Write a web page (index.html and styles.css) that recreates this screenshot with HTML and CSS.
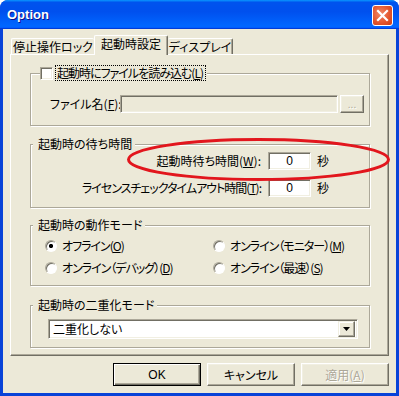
FILE: index.html
```html
<!DOCTYPE html>
<html lang="ja">
<head>
	<meta charset="UTF-8">
	<title>Option</title>
	<link rel="stylesheet" href="styles.css">
</head>
<body>
	<div class="window">
		<div class="titlebar">
			<span class="title">Option</span>
			<span class="close">
				<svg width="13" height="13" viewBox="0 0 13 13"><path d="M2 2L11 11M11 2L2 11" stroke="#fff" stroke-width="2.2" stroke-linecap="square"/></svg>
			</span>
		</div>
		<div class="client">
			<div class="tabs">
				<div class="tab tab-lock">停止操作ロック</div>
				<div class="tab active">起動時設定</div>
				<div class="tab tab-disp">ディスプレイ</div>
			</div>
			<div class="panel">
				<div class="group g-file">
					<div class="group-title check-title">
						<span class="checkbox"></span>
						<span class="focus tight">起動時にファイルを読み込む(<u>L</u>)</span>
					</div>
					<div class="row">
						<span class="file-label">ファイル名(<u>F</u>):</span>
						<span class="edit edit-off"></span>
						<span class="btn btn-dots">...</span>
					</div>
				</div>
				<div class="group g-wait">
					<div class="group-title">起動時の待ち時間</div>
					<div class="row">
						<span class="num-label">起動時待ち時間(<u>W</u>):</span>
						<span class="edit num">0</span>
						<span class="unit">秒</span>
					</div>
					<div class="row row2">
						<span class="num-label tight">ライセンスチェックタイムアウト時間(<u>T</u>):</span>
						<span class="edit num">0</span>
						<span class="unit">秒</span>
					</div>
				</div>
				<div class="group g-mode">
					<div class="group-title">起動時の動作モード</div>
					<div class="radios">
						<div class="radio-item tight"><span class="radio checked"></span>オフライン(<u>O</u>)</div>
						<div class="radio-item tight"><span class="radio"></span>オンライン（モニター）(<u>M</u>)</div>
						<div class="radio-item tight"><span class="radio"></span>オンライン（デバッグ）(<u>D</u>)</div>
						<div class="radio-item tight"><span class="radio"></span>オンライン（最速）(<u>S</u>)</div>
					</div>
				</div>
				<div class="group g-dup">
					<div class="group-title">起動時の二重化モード</div>
					<div class="combo">
						<span class="combo-text">二重化しない</span>
						<span class="drop"><svg width="7" height="4" viewBox="0 0 7 4"><path d="M0 0H7L3.5 4Z" fill="#000"/></svg></span>
					</div>
				</div>
			</div>
			<div class="buttons">
				<span class="btn btn-main default">OK</span>
				<span class="btn btn-main">キャンセル</span>
				<span class="btn btn-main off">適用(<u>A</u>)</span>
			</div>
		</div>
		<svg class="mark" width="399" height="396" viewBox="0 0 399 396"><ellipse cx="258.5" cy="159.5" rx="130" ry="20" fill="none" stroke="#e2161d" stroke-width="3"/></svg>
	</div>
</body>
</html>
```

FILE: styles.css
```css
*{
	padding:0;
	margin:0;
	box-sizing:border-box;
}
body{
	background:#fff;
	font-family:"Noto Sans CJK JP", sans-serif;
	font-size:12px;
	line-height:14px;
	font-feature-settings:"palt" 1;
	color:#000;
}
u{
	text-decoration:underline;
	text-underline-offset:1px;
}
.tight{
	letter-spacing:-1px;
}
.window{
	position:relative;
	width:399px;
	height:396px;
	display:flex;
	flex-direction:column;
	background:#0843d8;
	border-radius:8px 8px 0 0;
	overflow:hidden;
}
.titlebar{
	height:29px;
	flex:0 0 29px;
	display:flex;
	align-items:flex-start;
	justify-content:space-between;
	padding:0 6px 0 7px;
	background:linear-gradient(180deg,#0997ff,#0053ee 8%,#0050ee 40%,#0066ff 88%,#0066ff 93%,#005bff 95%,#003dd7 96%,#003dd7);
}
.title{
	margin-top:7px;
	font-family:"Liberation Sans", sans-serif;
	font-weight:bold;
	font-size:13px;
	line-height:16px;
	color:#fff;
	text-shadow:1px 1px #0f1089;
}
.close{
	margin-top:5px;
	width:21px;
	height:21px;
	display:flex;
	align-items:center;
	justify-content:center;
	border:1px solid #fff;
	border-radius:3px;
	background:radial-gradient(circle at 40% 40%,#f08a6a 0,#e4572f 55%,#cc3b12 100%);
}
.client{
	flex:1;
	margin:0 3px 3px;
	background:#ece9d8;
	padding:6px 7px 0;
}
.tabs{
	height:20px;
	display:flex;
	align-items:flex-end;
	padding-left:1px;
}
.tab{
	height:16px;
	margin-bottom:1px;
	padding-top:1px;
	border:1px solid #fff;
	border-bottom:none;
	border-right-color:#716f64;
	border-radius:2px 2px 0 0;
	box-shadow:inset -1px 0 #aca899;
	text-align:center;
	line-height:14px;
	white-space:nowrap;
}
.tab-lock{
	width:83px;
	border-right:none;
	box-shadow:none;
}
.tab-disp{
	width:65px;
	border-left:none;
}
.tab.active{
	position:relative;
	z-index:1;
	width:74px;
	height:20px;
	margin-bottom:0;
	padding-top:1px;
	background:#ece9d8;
}
.panel{
	height:302px;
	margin-top:-1px;
	border:1px solid #fff;
	border-right-color:#716f64;
	border-bottom-color:#716f64;
	box-shadow:inset -1px -1px #aca899;
	padding:0 18px 0 19px;
	overflow:hidden;
}
.group{
	border:1px solid #aca899;
	box-shadow:inset 1px 1px #fff, 1px 1px #fff;
}
.group-title{
	width:max-content;
	height:14px;
	margin:-8px 0 0 2px;
	padding:0 3px 0 5px;
	background:#ece9d8;
	white-space:nowrap;
}
.check-title{
	display:flex;
	align-items:center;
	margin-left:9px;
	padding:0 2px 0 0;
}
.checkbox{
	width:13px;
	height:13px;
	background:#fff;
	border:1px solid;
	border-color:#aca899 #fff #fff #aca899;
	box-shadow:inset 1px 1px #716f64, inset -1px -1px #f1efe2;
}
.focus{
	margin-left:3px;
	padding:0 2px 0 1px;
	outline:1px dotted #000;
}
.row{
	display:flex;
	align-items:center;
	height:18px;
	white-space:nowrap;
}
.edit{
	height:18px;
	border:1px solid;
	border-color:#aca899 #fff #fff #aca899;
	box-shadow:inset 1px 1px #716f64, inset -1px -1px #f1efe2;
	background:#fff;
}
.edit-off{
	width:218px;
	background:#ece9d8;
}
.btn{
	display:flex;
	align-items:center;
	justify-content:center;
	border:1px solid;
	border-color:#fff #716f64 #716f64 #fff;
	box-shadow:inset -1px -1px #aca899, inset 1px 1px #f1efe2;
	background:#ece9d8;
	white-space:nowrap;
}
.btn-dots{
	width:24px;
	height:18px;
	margin-left:2px;
	padding-top:2px;
	font-size:10px;
	color:#aca899;
	text-shadow:1px 1px #fff;
	font-family:"Liberation Sans", sans-serif;
}
.g-file{
	margin-top:18px;
	padding-bottom:12px;
}
.g-file .row{
	margin-top:15px;
	padding-left:19px;
}
.file-label{
	width:70px;
}
.g-wait{
	margin-top:18px;
	padding-bottom:10px;
}
.g-wait .row{
	margin-top:1px;
}
.g-wait .row2{
	margin-top:9px;
}
.num-label{
	width:230px;
	text-align:right;
}
.num{
	width:43px;
	margin-left:7px;
	text-align:center;
	line-height:16px;
	font-family:"Liberation Sans", sans-serif;
}
.unit{
	margin-left:6px;
}
.g-mode{
	margin-top:17px;
	padding-bottom:9px;
}
.radios{
	display:grid;
	grid-template-columns:168px 1fr;
	row-gap:6px;
	margin-top:6px;
	padding-left:14px;
}
.radio-item{
	display:flex;
	align-items:center;
	height:16px;
	white-space:nowrap;
}
.radio{
	width:12px;
	height:12px;
	margin-right:5px;
	border-radius:50%;
	border:1px solid;
	border-color:#aca899 #fff #fff #aca899;
	box-shadow:inset 1px 1px #716f64;
	background:#fff;
}
.radio.checked{
	background:radial-gradient(circle,#000 0,#000 1.8px,#fff 2.4px);
}
.g-dup{
	margin-top:19px;
	padding-bottom:8px;
}
.combo{
	display:flex;
	align-items:center;
	justify-content:space-between;
	width:310px;
	height:20px;
	margin:7px 0 0 17px;
	padding:0 2px 0 4px;
	border:1px solid;
	border-color:#aca899 #fff #fff #aca899;
	box-shadow:inset 1px 1px #716f64, inset -1px -1px #f1efe2;
	background:#fff;
}
.drop{
	display:flex;
	align-items:center;
	justify-content:center;
	width:17px;
	height:16px;
	border:1px solid;
	border-color:#f1efe2 #716f64 #716f64 #f1efe2;
	box-shadow:inset -1px -1px #aca899, inset 1px 1px #fff;
	background:#ece9d8;
}
.buttons{
	display:flex;
	justify-content:flex-end;
	gap:6px;
	margin-top:7px;
}
.btn-main{
	width:88px;
	height:23px;
}
.btn.default{
	border:1px solid #000;
	box-shadow:inset 1px 1px #fff, inset -1px -1px #716f64, inset -2px -2px #aca899;
	font-family:"Liberation Sans", sans-serif;
}
.btn.off{
	color:#aca899;
	text-shadow:1px 1px #fff;
}
.mark{
	position:absolute;
	left:0;
	top:0;
	pointer-events:none;
}
```
